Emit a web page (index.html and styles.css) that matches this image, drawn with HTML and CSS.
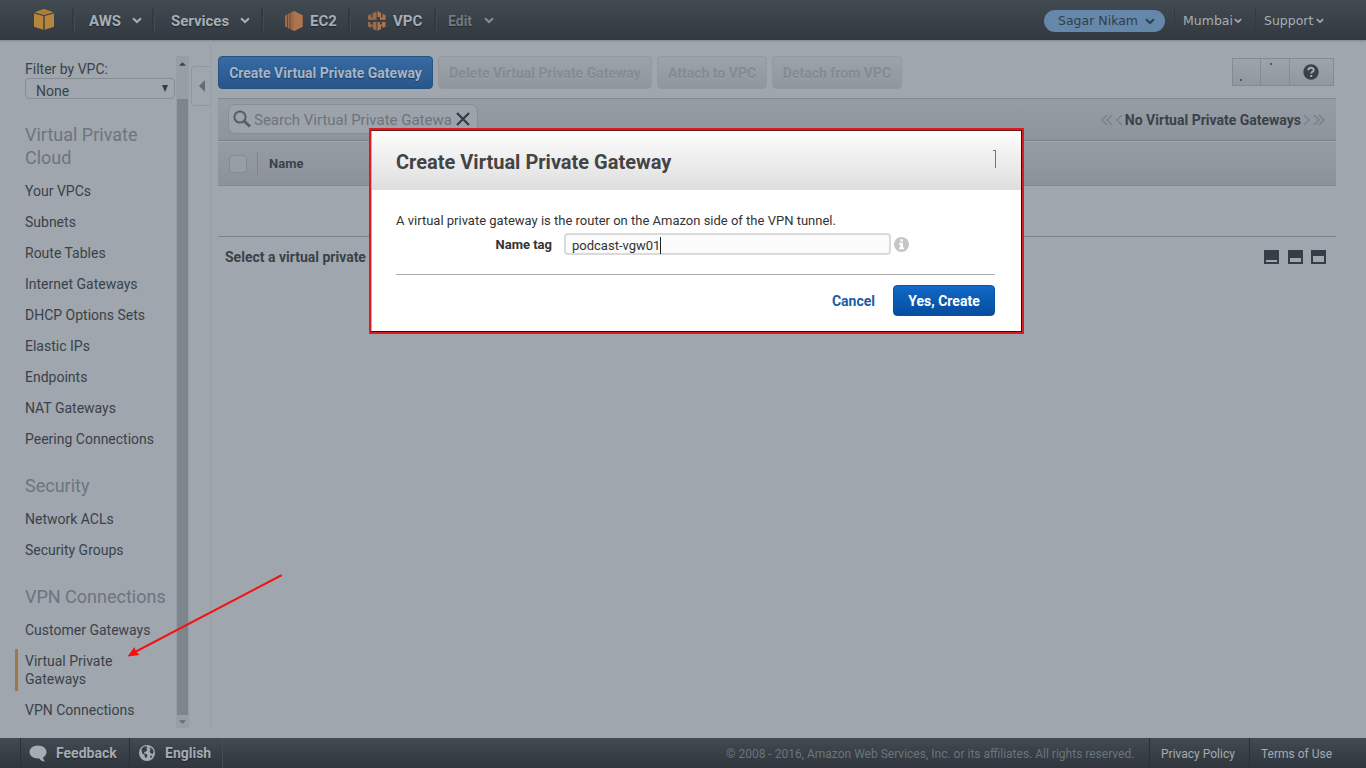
FILE: index.html
```html
<!DOCTYPE html>
<html lang="en">
<head>
<meta charset="utf-8">
<title>VPC Management Console</title>
<link rel="stylesheet" href="styles.css">
</head>
<body>
<div class="page">
  <header class="topbar">
    <div class="cell logo"><svg width="22" height="22" viewBox="0 0 22 22"><path fill="#b5853c" d="M1 4.400 10.300 7v13.700L1 17.800zM21 4.400 11.700 7v13.700L21 17.800zM1.500 3.200 11 0l9.500 3.200L11 5.900z"/><path d="M5.500 1.900 15 4.700M16.500 1.900 7 4.700" stroke="#9a7238" stroke-width=".6"/></svg></div>
    <div class="cell c-aws"><b>AWS</b><svg class="chev" width="10" height="7" viewBox="0 0 10 7"><path d="M1 1.200 5 5 9 1.200"/></svg></div>
    <div class="cell c-services"><b>Services</b><svg class="chev" width="10" height="7" viewBox="0 0 10 7"><path d="M1 1.200 5 5 9 1.200"/></svg></div>
    <div class="cell c-ec2"><svg width="18" height="20" viewBox="0 0 18 20"><path fill="#a06a48" d="M0 4.500 2 3.500v13L0 15.500zM2.700 3l2-1v16l-2-1zM5.400 2 8.500 0 17.500 4.200v11.600L8.500 20 5.400 18z"/><path d="M9 0v20l8.500-4.200V4.200z" fill="#ad744e"/></svg><b>EC2</b></div>
    <div class="cell c-vpc"><svg width="18" height="20" viewBox="0 0 18 20"><path fill="#9c6a4a" d="M0 4.500 3 3v3.500h1.500V2.400L8.500.5v8.300H0zM0 11h2.500v2.500H5V11h3.500v8.500L5 18v-2.500H3V17l-3-1.500z"/><path fill="#ad7650" d="M9.500 0 13 1.700v4.800h1.500V2.800l3 1.500v4.500H12V6H9.500zM9.500 11H12v2.500h2V11h3.500v4.700L14.500 17v-2H13v3l-3.500 2z"/></svg><b>VPC</b></div>
    <div class="cell c-edit"><b>Edit</b><svg class="chev" width="10" height="7" viewBox="0 0 10 7"><path d="M1 1.200 5 5 9 1.200"/></svg></div>
    <div class="account">
      <div class="user">Sagar Nikam<svg class="chev" width="10" height="7" viewBox="0 0 10 7"><path d="M1 1.200 5 5 9 1.200"/></svg></div>
      <div class="menu m-region">Mumbai<svg class="chev" width="8" height="6" viewBox="0 0 10 7"><path d="M1 1.200 5 5 9 1.200"/></svg></div>
      <div class="menu m-support">Support<svg class="chev" width="8" height="6" viewBox="0 0 10 7"><path d="M1 1.200 5 5 9 1.200"/></svg></div>
    </div>
  </header>

  <main class="body">
    <nav class="sidebar">
      <div class="filter-label">Filter by VPC:</div>
      <div class="select"><span>None</span><svg width="6" height="7" viewBox="0 0 6 7"><path d="M0 0h6L3 7z" fill="#353d45"/></svg></div>
      <h2>Virtual Private Cloud</h2>
      <ul><li>Your VPCs</li><li>Subnets</li><li>Route Tables</li><li>Internet Gateways</li><li>DHCP Options Sets</li><li>Elastic IPs</li><li>Endpoints</li><li>NAT Gateways</li><li>Peering Connections</li></ul>
      <h2>Security</h2>
      <ul><li>Network ACLs</li><li>Security Groups</li></ul>
      <h2>VPN Connections</h2>
      <ul><li>Customer Gateways</li><li class="active">Virtual Private Gateways</li><li>VPN Connections</li></ul>
    </nav>
    <div class="scroll">
      <svg width="7" height="4" viewBox="0 0 8 4"><path d="M4 0l4 4H0z" fill="#3c454d"/></svg>
      <div class="thumb"></div>
      <svg width="7" height="4" viewBox="0 0 8 4"><path d="M0 0h8L4 4z" fill="#636c74"/></svg>
    </div>
    <div class="rail"><div class="collapse"><svg width="6" height="12" viewBox="0 0 6 12"><path d="M6 0v12L0 6z" fill="#646c74"/></svg></div></div>

    <section class="content">
      <div class="actions">
        <div class="btn primary b1">Create Virtual Private Gateway</div>
        <div class="btn disabled b2">Delete Virtual Private Gateway</div>
        <div class="btn disabled b3">Attach to VPC</div>
        <div class="btn disabled b4">Detach from VPC</div>
        <div class="tools"><div class="t1"><i></i></div><div class="t2"><i></i></div><div class="t3"><svg width="16" height="16" viewBox="0 0 16 16"><circle cx="8" cy="8" r="7.700" fill="#394149"/><path d="M5.300 6.200c0-3.300 5.400-3.300 5.400-.3 0 1.900-2.500 1.800-2.500 3.700M8.200 11v2" fill="none" stroke="#a5acb3" stroke-width="2"/></svg></div></div>
      </div>
      <div class="filterbar">
        <div class="search"><svg width="18" height="18" viewBox="0 0 18 18" fill="none"><circle cx="7" cy="7" r="5.600" stroke="#555e66" stroke-width="2"/><path d="M11 11l6 5.500" stroke="#555e66" stroke-width="3"/></svg><span>Search Virtual Private Gatewa</span><svg width="14" height="14" viewBox="0 0 14 14"><path d="M1 1l12 12M13 1 1 13" stroke="#353d46" stroke-width="2.300"/></svg></div>
        <div class="pager"><svg width="22" height="12" viewBox="0 0 22 12"><path d="M6 1 1 6l5 5M11 1 6 6l5 5M21 1l-5 5 5 5"/></svg><b>No Virtual Private Gateways</b><svg width="22" height="12" viewBox="0 0 22 12"><path d="M1 1l5 5-5 5M11 1l5 5-5 5M16 1l5 5-5 5"/></svg></div>
      </div>
      <div class="thead"><span class="check"></span><span class="colsep"></span><b>Name</b></div>
      <div class="empty"></div>
      <div class="detail"><b>Select a virtual private gateway above</b><div class="panes"><i class="p1"></i><i class="p2"></i><i class="p3"></i></div></div>
    </section>
  </main>

  <footer class="footer">
    <div class="feedback"><svg width="18" height="17" viewBox="0 0 18 17"><path fill="#a5acb2" d="M9 .5c4.700 0 8.500 2.800 8.500 6.500 0 2.500-1.500 4.500-3.500 5.500.2 1.500.8 2.700 2 3.900-2.700-.1-4.500-1.200-5.500-3C5 14 .5 11 .5 7 .5 3.300 4.300.5 9 .5z"/></svg><b>Feedback</b></div>
    <div class="lang"><svg width="16" height="16" viewBox="0 0 16 16"><circle cx="8" cy="8" r="8" fill="#a5acb2"/><path fill="#363e45" d="M2.500 4C3.500 2.300 5.500 1.200 7.500 1.200L8.500 2.500 7 3.500l1.500 1L7 6.500 5.500 7 5 8.500l2.500.5L8.500 11 7 13 6 12.500 5.500 10 3 8zM10.500 2l3 2 1.300 3-1.300 2L12 8.500l-1.500-2 1-1.500zM11.500 10.500l2 .5-1.500 2-1-.5z"/></svg><b>English</b></div>
    <div class="copy">© 2008 - 2016, Amazon Web Services, Inc. or its affiliates. All rights reserved.</div>
    <div class="flink f1">Privacy Policy</div>
    <div class="flink f2">Terms of Use</div>
  </footer>

  <div class="dialog">
    <div class="dhead"><h1>Create Virtual Private Gateway</h1><svg width="4" height="19" viewBox="0 0 4 19"><path d="M0 1.500h2M2.500 1v18" stroke="#777" fill="none"/></svg></div>
    <div class="dbody">
      <p>A virtual private gateway is the router on the Amazon side of the VPN tunnel.</p>
      <div class="field"><b>Name tag</b><div class="input"><span>podcast-vgw01</span></div><svg width="15" height="15" viewBox="0 0 15 15"><circle cx="7.500" cy="7.500" r="7.500" fill="#c5c5c5"/><path fill="#fff" d="M6.300 2.200h2.600v2.300H6.300zM5.200 5.800h3.700v4.600h1.200v1.900H5v-1.900h1.300V7.700H5.200z"/></svg></div>
      <div class="dfoot"><a>Cancel</a><div class="yes">Yes, Create</div></div>
    </div>
  </div>
  <svg class="arrow" width="160" height="90" viewBox="0 0 160 90"><path d="M157 5.500 11 82" stroke="#f01414" stroke-width="2" stroke-linecap="round"/><path d="M3.500 86.500 10.500 77l1.300 4.600L15.500 85z" fill="#f80c0c"/></svg>
</div>
</body>
</html>
```

FILE: styles.css
```css
* { box-sizing: border-box; }
body { margin: 0; font-family: Roboto, "Liberation Sans", sans-serif; font-size: 14px; color: #3a4249; }
.page { position: relative; width: 1366px; height: 768px; overflow: hidden; background: #9fa6ad; display: flex; flex-direction: column; }
svg { display: block; flex: none; }
h1, h2, p, ul { margin: 0; padding: 0; }
li { list-style: none; }

.topbar { height: 40px; flex: none; display: flex; background: linear-gradient(#434b52, #31383f); box-shadow: 0 1px 2px #7e868e; color: #a7aeb4; }
.cell { display: flex; align-items: center; font-size: 15px; padding-top: 1px; text-shadow: 0 1px 1px #20262b; position: relative; white-space: nowrap; }
.cell::after { content: ""; position: absolute; right: 0; top: 8px; height: 24px; width: 2px; background: #333a41; border-right: 1px solid #434b52; }
.cell b { font-weight: 700; }
.cell b, .cell svg { position: relative; }
.chev path { fill: none; stroke: currentColor; stroke-width: 2; }
.logo { width: 75px; padding: 0 0 0 33px; }
.c-aws { width: 80px; padding-left: 14px; justify-content: space-between; padding-right: 13px; }
.c-services { width: 109px; padding-left: 16px; justify-content: space-between; padding-right: 14px; }
.c-ec2 { width: 87px; padding: 2px 0 0 21px; gap: 7px; }
.c-vpc { width: 86px; padding: 2px 0 0 17px; gap: 7px; }
.c-edit { width: 60px; padding-left: 11px; gap: 12px; color: #727a82; }
.c-edit b { font-size: 14px; }
.c-edit::after { display: none; }
.c-edit .chev { color: #858d95; }
.account { margin-left: auto; display: flex; align-items: center; font: 12.500px "DejaVu Sans", sans-serif; padding-right: 42px; padding-top: 1px; }
.user { display: flex; align-items: center; width: 121px; height: 22px; border-radius: 11px; background: #6588aa; color: #323e49; padding: 0 10px 1px 14px; justify-content: space-between; }
.menu { display: flex; align-items: center; justify-content: space-between; padding-bottom: 1px; position: relative; }
.menu::before { content: ""; position: absolute; left: -9px; top: -5px; width: 1px; height: 24px; background: #333a41; }
.user .chev, .menu .chev { margin-top: 2px; }
.m-region { width: 59px; margin-left: 18px; }
.m-support { width: 60px; margin-left: 22px; }

.body { height: 698px; display: flex; }
.sidebar { width: 176px; padding: 20px 0 0 25px; }
.filter-label { line-height: 18px; height: 18px; }
.select { width: 150px; height: 21px; border: 1px solid #858d95; border-radius: 4px; display: flex; justify-content: space-between; align-items: center; padding: 5px 6px 0 10px; margin-bottom: 24px; }
.select svg { margin-top: -6px; }
.sidebar h2 { font-size: 18px; line-height: 23px; font-weight: 400; color: #6d757d; margin-bottom: 13px; }
.sidebar ul { display: flex; flex-direction: column; gap: 13px; margin-bottom: 26px; }
.sidebar li { line-height: 18px; padding-right: 40px; }
.sidebar li:not(.active) { white-space: nowrap; padding-right: 0; }
.sidebar .active { border-left: 3px solid #9e7847; margin: -3px 0 -3px -10px; padding: 3px 40px 3px 7px; }
.scroll { width: 13px; margin-top: 16px; height: 672px; background: #979ea5; display: flex; flex-direction: column; align-items: center; padding: 6px 0 4px; }
.thumb { width: 11px; height: 616px; margin: 33px 0 auto; background: #7e868d; }
.rail { width: 22px; height: 688px; border-right: 1px solid #989fa6; padding: 26px 0 0 2px; }
.collapse { height: 40px; border: 1px solid #8f969d; border-right: 0; border-radius: 4px 0 0 4px; display: flex; align-items: center; padding-left: 7px; }
.content { width: 1118px; margin-left: 7px; padding-top: 16px; }
.actions { display: flex; gap: 5px; height: 33px; }
.btn { height: 33px; border-radius: 4px; font-weight: 700; display: flex; align-items: center; justify-content: center; border: 1px solid #8b939a; white-space: nowrap; }
.primary { background: linear-gradient(#366ba3, #28568b); border-color: #285381; color: #a8b6c4; text-shadow: 0 1px 1px #183b64; }
.disabled { color: #848b93; background: linear-gradient(#9ca3aa, #8f969d); border-color: #92999f; text-shadow: 0 1px 0 #9da4ab; }
.b1 { width: 215px; } .b2 { width: 214px; } .b3 { width: 110px; } .b4 { width: 130px; }
.tools { margin: 2px 2px 0 auto; display: flex; width: 102px; height: 28px; border: 1px solid #838b93; background: linear-gradient(#9ca3aa, #91989f); }
.tools div { border-right: 1px solid #858d94; }
.tools i { display: block; width: 2px; height: 2px; background: #515960; }
.t1 { width: 28px; padding: 20px 0 0 7px; } .t2 { width: 29px; padding: 4px 0 0 9px; }
.tools .t3 { flex: 1; border: 0; display: flex; align-items: center; justify-content: center; padding-right: 1px; }
.filterbar { margin-top: 9px; height: 43px; border-top: 1px solid #838a92; border-bottom: 1px solid #7d858c; background: linear-gradient(#969da4, #8d949b); display: flex; justify-content: space-between; padding: 5px 10px 0; }
.search { width: 250px; height: 30px; border: 1px solid #878f96; border-radius: 7px; background: #9ca3aa; display: flex; align-items: center; color: #6c747c; font-size: 15px; padding-left: 4px; }
.search span { margin-left: 3px; padding-top: 2px; width: 202px; white-space: nowrap; }
.pager { display: flex; align-items: center; height: 32px; gap: 2px; margin-right: 1px; }
.pager path { fill: none; stroke: #777f87; stroke-width: 1.300; }
.thead { height: 45px; border-top: 1px solid #a0a7ae; border-bottom: 1px solid #818990; background: linear-gradient(#959ca3, #8b9299); display: flex; align-items: center; padding-left: 11px; font-size: 13px; }
.check { width: 18px; height: 18px; border: 1px solid #848c94; border-radius: 4px; background: #979ea5; }
.colsep { width: 1px; height: 24px; background: #7d858d; margin: 0 11px 0 10px; }
.empty { height: 51px; border-bottom: 1px solid #7b838b; }
.detail { height: 40px; display: flex; align-items: center; justify-content: space-between; padding: 0 10px 0 7px; }
.panes { display: flex; }
.panes i { width: 15px; height: 14px; border: 2px solid #353e47; background: #a1a8af; }
.panes .p1 { border-top-width: 10px; } .panes .p2 { border-top-width: 8px; margin: 0 8px 0 9px; } .panes .p3 { border-top-width: 6px; }

.footer { height: 30px; display: flex; align-items: center; background: linear-gradient(#424a52, #2f363d); color: #a5acb2; line-height: 30px; font-size: 12px; white-space: nowrap; }
.footer > div { height: 30px; display: flex; align-items: center; }
.footer b { font-size: 14px; text-shadow: 0 1px 1px #20262b; }
.feedback { margin-left: 20px; width: 110px; border-left: 1px solid #2a3137; border-right: 1px solid #2a3137; padding-left: 8px; gap: 9px; }
.lang { width: 93px; border-right: 1px solid #444c54; padding-left: 9px; gap: 10px; }
.footer .copy { margin-left: auto; padding-top: 1px; color: #6c747b; width: 423px; }
.footer .flink { border-left: 1px solid #293036; padding: 1px 0 0 11px; }
.f1 { width: 100px; } .f2 { width: 117px; }

.dialog { position: absolute; left: 369px; top: 128px; width: 655px; height: 206px; border: 2px solid #d81c20; background: #fff; box-shadow: inset -1px -1px 0 #301214, inset 0 1px 0 #70191c, inset 1px 0 0 #ef9a9c; padding: 1px; color: #333; }
.dhead { height: 59px; background: linear-gradient(#fdfdfd, #dedede); display: flex; justify-content: space-between; align-items: center; padding: 2px 24px 0; }
.dhead svg { margin-top: -6px; }
.dhead h1 { font-size: 20px; line-height: 24px; font-weight: 700; color: #444; }
.dbody { padding: 23px 26px 0 24px; font-size: 13px; }
.dbody p { line-height: 16px; height: 20px; white-space: nowrap; }
.field { display: flex; align-items: center; height: 22px; }
.field b { width: 156px; text-align: right; margin-right: 12px; }
.input { width: 327px; height: 22px; border: 2px solid #dadada; border-radius: 4px; background: #fbfbfb; padding: 2px 0 0 6px; line-height: 17px; margin-right: 3px; }
.input span { display: inline-block; height: 17px; border-right: 1px solid #222; }
.dfoot { border-top: 1px solid #aaa; margin-top: 19px; padding-top: 10px; display: flex; justify-content: flex-end; align-items: center; gap: 18px; font-size: 14px; font-weight: 700; }
.dfoot a { color: #1b5ca4; }
.yes { width: 102px; height: 31px; border-radius: 4px; border: 1px solid #0753a5; background: linear-gradient(#1269c7, #044da0); color: #fff; text-align: center; line-height: 30px; }
.arrow { position: absolute; left: 124px; top: 570px; }
```
